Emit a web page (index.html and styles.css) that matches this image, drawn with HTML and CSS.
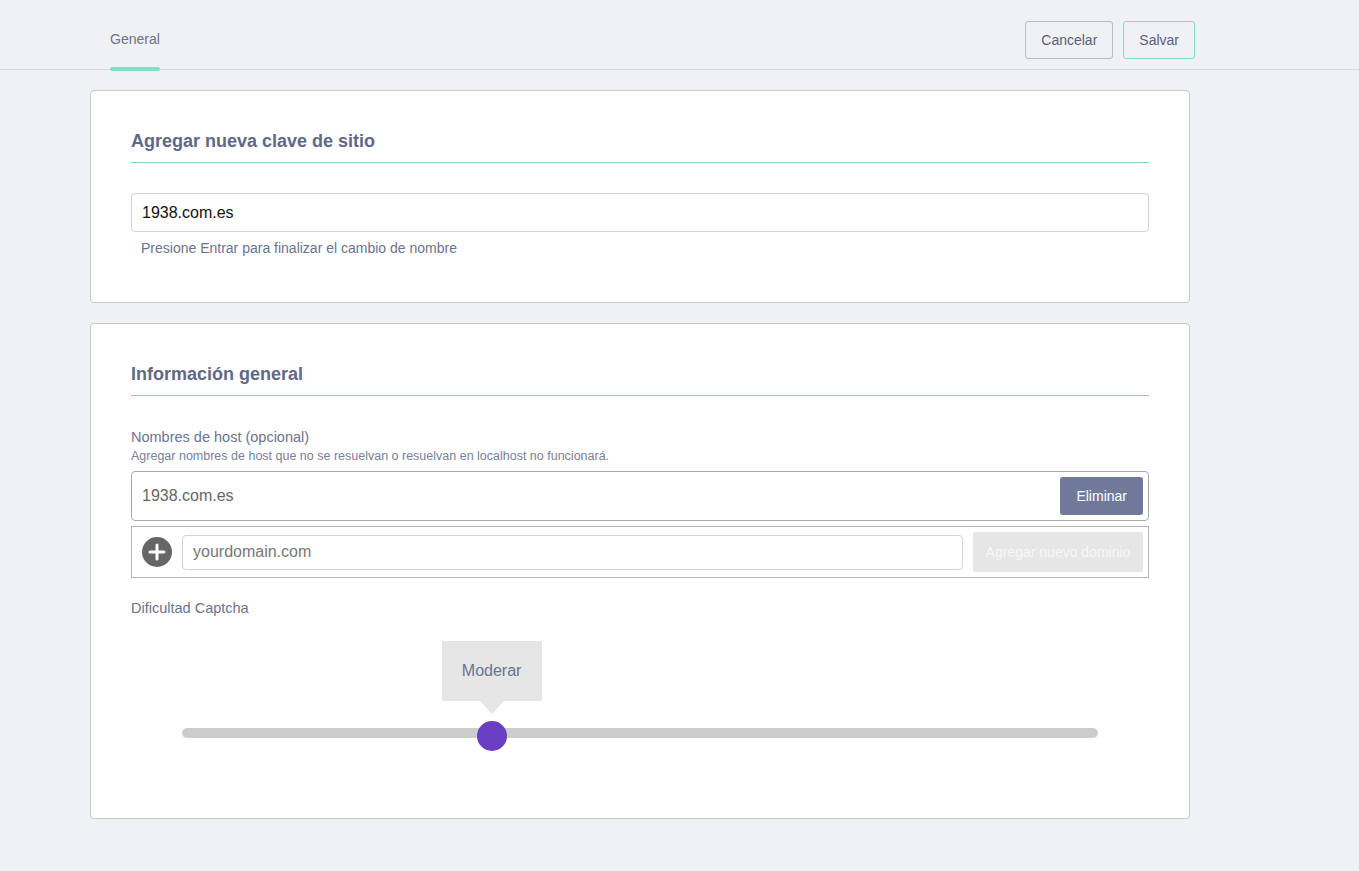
FILE: index.html
```html
<!DOCTYPE html>
<html lang="es">
<head>
<meta charset="UTF-8" />
<meta name="viewport" content="width=device-width, initial-scale=1" />
<title>Clave de sitio</title>
<link rel="stylesheet" href="styles.css">
</head>
<body>

<!-- Top bar: tabs + actions -->
<header class="topbar">
  <nav class="tabs">
    <a class="tab active" href="#">General</a>
  </nav>
  <div class="actions">
    <button type="button" class="btn btn-cancel">Cancelar</button>
    <button type="button" class="btn btn-save">Salvar</button>
  </div>
</header>

<main class="content">

  <!-- Site key name -->
  <section class="card card-name">
    <h2 class="card-title">Agregar nueva clave de sitio</h2>
    <input type="text" class="text-input name-input" value="1938.com.es" />
    <p class="hint">Presione Entrar para finalizar el cambio de nombre</p>
  </section>

  <!-- General info -->
  <section class="card card-info">
    <h2 class="card-title">Información general</h2>

    <div class="field">
      <div class="field-label">Nombres de host (opcional)</div>
      <div class="field-note">Agregar nombres de host que no se resuelvan o resuelvan en localhost no funcionará.</div>

      <div class="host-row">
        <span class="host-name">1938.com.es</span>
        <button type="button" class="btn-remove">Eliminar</button>
      </div>

      <div class="add-row">
        <span class="add-icon">
          <svg width="30" height="30" viewBox="0 0 30 30">
            <circle cx="15" cy="15" r="15" fill="#666"/>
            <path d="M15 8v14M8 15h14" stroke="#fff" stroke-width="3" stroke-linecap="round"/>
          </svg>
        </span>
        <input type="text" class="text-input add-input" placeholder="yourdomain.com" />
        <button type="button" class="btn-add" disabled>Agregar nuevo dominio</button>
      </div>
    </div>

    <div class="field">
      <div class="field-label">Dificultad Captcha</div>
      <div class="slider">
        <div class="slider-track">
          <div class="slider-thumb" style="left: 33.8%">
            <div class="slider-tip">Moderar</div>
          </div>
        </div>
      </div>
    </div>
  </section>

</main>

</body>
</html>
```

FILE: styles.css
```css
/* Base */
*, *::before, *::after {
  box-sizing: border-box;
}
body {
  margin: 0;
  font-family: "Liberation Sans", Arial, Helvetica, sans-serif;
  background: #f0f1f5;
  color: #6b7390;
}

/* Top bar */
.topbar {
  display: flex;
  justify-content: space-between;
  align-items: flex-start;
  height: 70px;
  padding: 0 164px 0 110px;
  border-bottom: 1px solid #d6d7dc;
}
.tabs {
  display: flex;
  height: 70px;
}
.tab {
  position: relative;
  display: block;
  padding-top: 31px;
  font-size: 14px;
  color: #6b7390;
  text-decoration: none;
}
.tab.active::after {
  content: "";
  position: absolute;
  left: 0;
  right: 0;
  bottom: -1px;
  height: 4px;
  border-radius: 2px;
  background: #84dccd;
}
.actions {
  display: flex;
  gap: 10px;
  padding-top: 21px;
}
.btn {
  height: 38px;
  padding: 0 15px;
  font-family: inherit;
  font-size: 14px;
  color: #5a6078;
  background: transparent;
  border: 1px solid #b9bcc4;
  border-radius: 3px;
  cursor: pointer;
}
.btn-save {
  border-color: #8ad8cb;
}

/* Cards */
.content {
  width: 1100px;
  margin-left: 90px;
  padding-top: 20px;
}
.card {
  background: #fff;
  border: 1px solid #c6c8cd;
  border-radius: 4px;
  padding: 40px 40px 0;
  margin-bottom: 20px;
}
.card-name {
  height: 213px;
}
.card-info {
  height: 496px;
}
.card-title {
  margin: 0;
  padding-bottom: 10px;
  font-size: 18px;
  font-weight: 700;
  color: #5f6885;
  border-bottom: 1px solid #86cdc8;
}

.text-input {
  font-family: inherit;
  font-size: 16px;
  border: 1px solid #d3d4d8;
  border-radius: 4px;
  background: #fff;
  outline: none;
}
.name-input {
  display: block;
  width: 100%;
  height: 39px;
  margin-top: 30px;
  padding: 0 10px;
  color: #111;
}
.hint {
  margin: 8px 0 0 10px;
  font-size: 14px;
  color: #6b7390;
}

/* Host names */
.field {
  margin-top: 33px;
}
.card-info .field + .field {
  margin-top: 22px;
}
.field-label {
  font-size: 14.5px;
  line-height: 17px;
  color: #6b7390;
}
.field-note {
  margin-top: 3px;
  font-size: 12.5px;
  color: #7a8098;
}
.host-row {
  display: flex;
  align-items: center;
  justify-content: space-between;
  height: 50px;
  margin-top: 8px;
  padding: 0 5px 0 10px;
  border: 1px solid #a6a8b0;
  border-radius: 4px;
}
.host-name {
  font-size: 16px;
  color: #666;
}
.btn-remove {
  height: 38px;
  padding: 0 16px;
  font-family: inherit;
  font-size: 14px;
  color: #fff;
  background: #6f7a9a;
  border: none;
  border-radius: 3px;
}
.add-row {
  display: flex;
  align-items: center;
  gap: 10px;
  height: 52px;
  margin-top: 5px;
  padding: 0 5px 0 10px;
  border: 1px solid #b5b5b5;
}
.add-icon {
  display: flex;
  width: 30px;
  height: 30px;
}
.add-input {
  flex: 1;
  height: 35px;
  padding: 0 10px;
  color: #333;
}
.add-input::placeholder {
  color: #777;
}
.btn-add {
  width: 170px;
  height: 40px;
  font-family: inherit;
  font-size: 14px;
  color: #f7f7f7;
  background: #e6e6e6;
  border: none;
  border-radius: 3px;
}

/* Difficulty slider */
.slider {
  padding: 111px 51px 0;
}
.slider-track {
  position: relative;
  height: 10px;
  border-radius: 5px;
  background: #cccccc;
}
.slider-thumb {
  position: absolute;
  top: -7px;
  width: 30px;
  height: 30px;
  margin-left: -15px;
  border-radius: 50%;
  background: #6a3ec3;
}
.slider-tip {
  position: absolute;
  bottom: 50px;
  left: 50%;
  width: 100px;
  height: 60px;
  margin-left: -50px;
  display: flex;
  align-items: center;
  justify-content: center;
  font-size: 16px;
  color: #6b7390;
  background: #e6e6e6;
}
.slider-tip::after {
  content: "";
  position: absolute;
  top: 100%;
  left: 50%;
  margin-left: -12px;
  border-left: 12px solid transparent;
  border-right: 12px solid transparent;
  border-top: 13px solid #e6e6e6;
}
```
